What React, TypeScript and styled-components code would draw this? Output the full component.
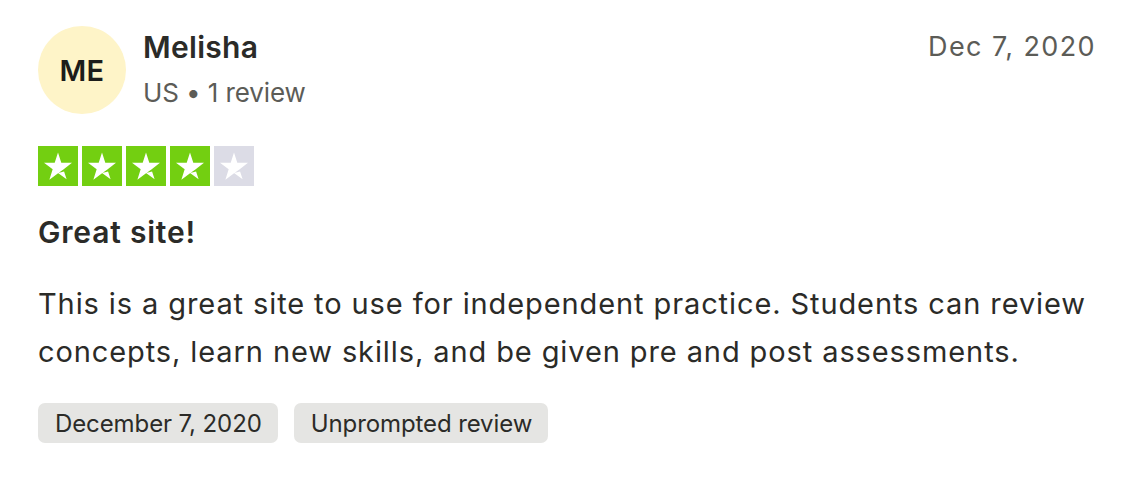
import React from "react";
import styled, { createGlobalStyle } from "styled-components";

const Global = createGlobalStyle`
  html, body { margin: 0; padding: 0; background: #ffffff; }
  body { font-family: Inter, "Noto Sans", sans-serif; color: #2b2b28; }
`;

const Card = styled.article`
  display: flex;
  flex-direction: column;
  padding: 26px 46px 0 38px;
`;

const Header = styled.header`
  display: flex;
  align-items: flex-start;
  justify-content: space-between;
`;

const Consumer = styled.div`
  display: flex;
  align-items: flex-start;
  gap: 17px;
`;

const Avatar = styled.div`
  width: 88px;
  height: 88px;
  border-radius: 50%;
  background: #fef4c8;
  display: flex;
  align-items: center;
  justify-content: center;
  font-size: 29px;
  font-weight: 600;
  color: #1c1c1a;
  letter-spacing: 0.3px;
`;

const Info = styled.div`
  display: flex;
  flex-direction: column;
  padding-top: 3px;
`;

const Name = styled.div`
  font-size: 30px;
  font-weight: 600;
  line-height: 36px;
  letter-spacing: 0.3px;
  color: #2b2b28;
`;

const Meta = styled.div`
  font-size: 26px;
  line-height: 36px;
  margin-top: 10px;
  letter-spacing: -0.1px;
  color: #5c5c57;
`;

const DateText = styled.time`
  font-size: 27px;
  line-height: 36px;
  color: #5c5c57;
  padding-top: 3px;
  letter-spacing: 1.4px;
`;

const Stars = styled.div`
  display: flex;
  gap: 4px;
  margin-top: 32px;
`;

const StarBox = styled.div<{ $filled: boolean }>`
  width: 40px;
  height: 40px;
  background: ${(p) => (p.$filled ? "#73cf11" : "#dcdce6")};
  display: flex;
  align-items: center;
  justify-content: center;
`;

const Title = styled.h2`
  margin: 28px 0 0;
  font-size: 30px;
  font-weight: 600;
  line-height: 36px;
  letter-spacing: 0.8px;
  color: #2b2b28;
`;

const Body = styled.p`
  margin: 30px 0 0;
  font-size: 29px;
  line-height: 48px;
  letter-spacing: 0.9px;
  color: #2b2b28;
  max-width: 1070px;
`;

const Tags = styled.div`
  display: flex;
  gap: 16px;
  margin-top: 27px;
`;

const Tag = styled.span`
  height: 40px;
  padding: 0 16px 0 17px;
  border-radius: 7px;
  background: #e5e5e3;
  display: flex;
  align-items: center;
  font-size: 24px;
  letter-spacing: -0.1px;
  color: #2b2b28;
`;

const Star = () => (
  <svg width="28" height="28" viewBox="0 0 24 24">
    <path
      d="M12 17.964l5.214-1.321 2.179 6.714L12 17.964zM24 9.286h-9.179L12 .357 9.179 9.286H0l7.429 5.5-2.821 8.928 7.428-5.5 4.572-3.285L24 9.286z"
      fill="#ffffff"
    />
  </svg>
);

export default function App() {
  return (
    <>
      <Global />
      <Card>
        <Header>
          <Consumer>
            <Avatar>ME</Avatar>
            <Info>
              <Name>Melisha</Name>
              <Meta>US • 1 review</Meta>
            </Info>
          </Consumer>
          <DateText>Dec 7, 2020</DateText>
        </Header>
        <Stars>
          {[0, 1, 2, 3, 4].map((i) => (
            <StarBox key={i} $filled={i < 4}>
              <Star />
            </StarBox>
          ))}
        </Stars>
        <Title>Great site!</Title>
        <Body>
          This is a great site to use for independent practice. Students can review
          concepts, learn new skills, and be given pre and post assessments.
        </Body>
        <Tags>
          <Tag>December 7, 2020</Tag>
          <Tag>Unprompted review</Tag>
        </Tags>
      </Card>
    </>
  );
}
